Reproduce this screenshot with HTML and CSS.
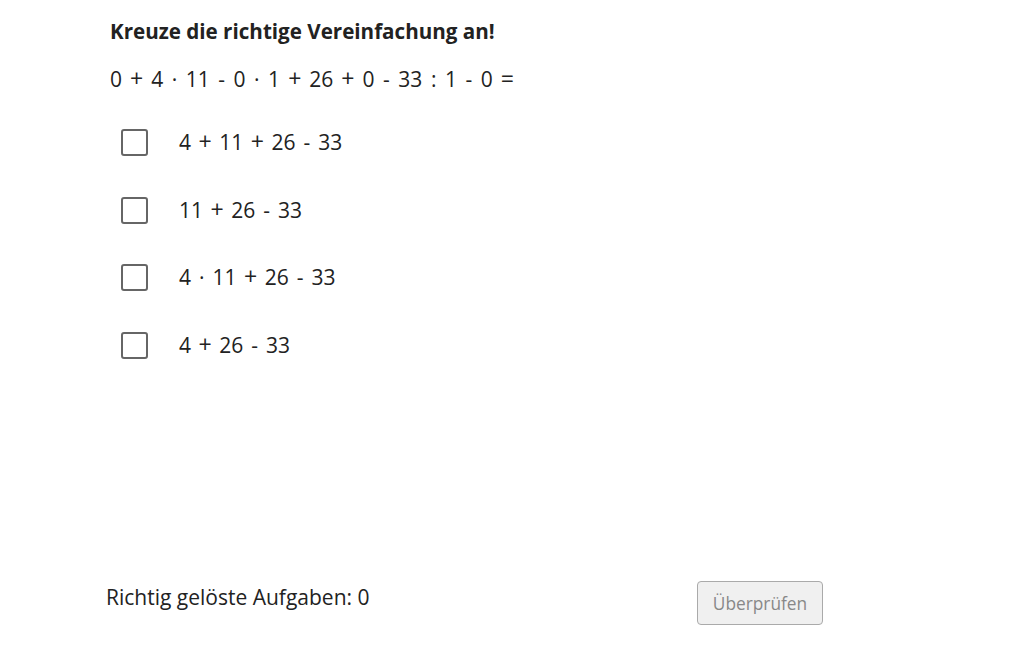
FILE: index.html
```html
<!DOCTYPE html>
<html>
<head>
<meta charset="utf-8">
<link rel="stylesheet" href="styles.css">
</head>
<body>
<div class="page">
  <div class="task">
    <h1 class="title">Kreuze die richtige Vereinfachung an!</h1>
    <p class="equation">0<span class="op big">+</span>4<span class="op">·</span>11<span class="op">-</span>0<span class="op">·</span>1<span class="op big">+</span>26<span class="op big">+</span>0<span class="op">-</span>33<span class="op">:</span>1<span class="op">-</span>0<span class="op big">=</span></p>
    <ul class="options">
      <li class="option"><span class="box"></span><span class="label">4<span class="op big">+</span>11<span class="op big">+</span>26<span class="op">-</span>33</span></li>
      <li class="option"><span class="box"></span><span class="label">11<span class="op big">+</span>26<span class="op">-</span>33</span></li>
      <li class="option"><span class="box"></span><span class="label">4<span class="op">·</span>11<span class="op big">+</span>26<span class="op">-</span>33</span></li>
      <li class="option"><span class="box"></span><span class="label">4<span class="op big">+</span>26<span class="op">-</span>33</span></li>
    </ul>
  </div>
  <div class="footer">
    <span class="score">Richtig gelöste Aufgaben: 0</span>
    <button class="check">Überprüfen</button>
  </div>
</div>
</body>
</html>
```
FILE: styles.css
```css
html, body {
  margin: 0;
  padding: 0;
  background: #fff;
}
body {
  font-family: "Open Sans", Lato, sans-serif;
  color: #222;
  width: 1032px;
  height: 645px;
  overflow: hidden;
}
.page {
  display: flex;
  flex-direction: column;
  height: 645px;
}
.task {
  padding-left: 110px;
  padding-top: 16px;
  flex: 1;
}
.title {
  margin: 0;
  font-size: 20.6px;
  font-weight: 700;
  line-height: 30px;
}
.equation {
  margin: 18px 0 0 0;
  font-size: 21px;
  line-height: 30px;
}
.op {
  display: inline-block;
  margin: 0 8.5px;
}
.op.big {
  font-size: 1.1em;
  line-height: 1;
  margin: 0 8px;
}
.options {
  list-style: none;
  margin: 35px 0 0 11px;
  padding: 0;
  display: flex;
  flex-direction: column;
  gap: 40.6px;
}
.option {
  display: flex;
  align-items: center;
  height: 27px;
}
.box {
  width: 23px;
  height: 23px;
  border: 2px solid #666;
  border-radius: 3px;
  flex: none;
}
.label {
  margin-left: 31px;
  font-size: 21px;
  line-height: 27px;
}
.label .op {
  margin: 0 8px;
}
.label .op.big {
  margin: 0 7.5px;
}
.footer {
  display: flex;
  align-items: center;
  padding: 0 0 20px 106px;
}
.score {
  font-size: 21px;
  width: 591px;
  position: relative;
  top: -6px;
}
.check {
  width: 126px;
  height: 44px;
  border: 1px solid #aaa;
  border-radius: 4px;
  background: #f0f0f0;
  color: #888;
  font-family: "Open Sans", Lato, sans-serif;
  font-size: 17.3px;
  padding: 0;
}
```
